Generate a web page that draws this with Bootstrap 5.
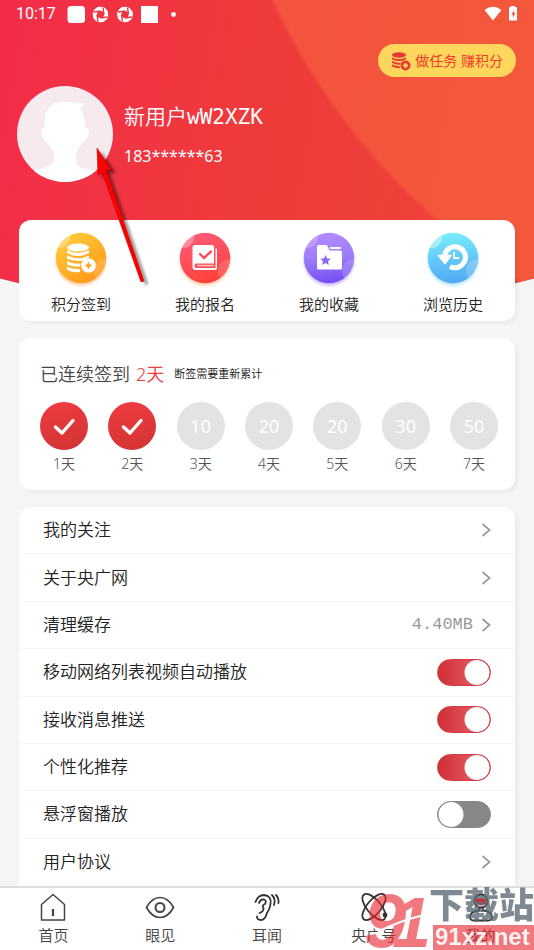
<!DOCTYPE html>
<html lang="zh-CN">
<head>
<meta charset="utf-8">
<meta name="viewport" content="width=device-width, initial-scale=1">
<title>我的</title>
<link href="https://cdn.jsdelivr.net/npm/bootstrap@5.3.0/dist/css/bootstrap.min.css" rel="stylesheet">
<style>
body{font-family:"Noto Sans","Noto Sans CJK SC",sans-serif;background:#f5f5f5;color:#222;line-height:1.5;font-size:15px}
a{color:inherit;text-decoration:none}
.hero-bg{height:312px;z-index:0;clip-path:ellipse(111% 100% at 50% 0);
 background:radial-gradient(circle 654px at calc(100% + 331px) -273px,rgba(248,104,62,.55) 650px,transparent 655px),linear-gradient(100deg,#f32c4a,#ef3a3b 45%,#ee4638)}
.status-bar{height:28px;padding:0 16px;font:400 16px/28px Roboto,sans-serif}
.task-row{padding:16px 18px 0}
.task-pill{background:#ffd65c;color:#f23c28;height:33px;font-size:14px;line-height:20px;padding:0 13px;border:0}
.profile-row{padding:9px 17px 0}
.avatar-pic{width:96px;height:96px}
.profile-text{padding-left:11px}
.user-name{font-family:"DejaVu Sans Mono","Noto Sans CJK SC",monospace;font-size:21px;line-height:32px;font-weight:350}
.user-phone{font-size:16px;line-height:22px;margin-top:12px}
.panel{border:0;border-radius:12px;box-shadow:3px 3px 3px #0000000a}
.page-body{padding:38px 19px 0}
.quick-grid{padding:12px 0 6px}
.quick-grid svg{width:56px;height:58px}
.quick-grid span{font-size:15px;line-height:22px;margin-top:3px}
.sign-card{margin-top:17px;padding:23px 17px 16px 21px}
.sign-title{font-size:18px;line-height:26px;color:#444}
.sign-title b{font-weight:350;color:#f03a3c;margin-left:6px}
.sign-title small{font-size:11px;color:#111;margin-left:10px}
.day-list{margin-top:15px}
.day-dot{width:48px;height:48px;background:#e3e3e3;color:#fff;font-size:18px;font-weight:400}
.day-dot.done{background:linear-gradient(170deg,#f03b41,#d23434)}
.day-list li>span:last-child{font-size:14px;line-height:20px;color:#555;margin-top:4px}
.menu-card,.quick-grid,.sign-title,.day-list,.tab-bar{font-weight:350}
.menu-card{margin-top:17px;border-radius:12px 12px 0 0}
.menu-card .menu-item{flex:1 0 44px;padding:0 24px;font-size:17px;line-height:26px;border-bottom:1px solid #f4f4f4}
.menu-card .menu-item:last-child{border-bottom:0}
.cache-size{font-family:"Liberation Mono",monospace;font-size:17px;color:#999}
.form-check-input.toggle{width:54px;height:27px;margin:0;border:1px solid #878787;border-radius:14px;
 background:radial-gradient(circle at 13px 50%,#fff 12px,transparent 13px),#878787}
.form-check-input.toggle:checked{border-color:#d6393f;
 background:radial-gradient(circle at calc(100% - 13px) 50%,#fff 12px,transparent 13px),linear-gradient(90deg,#d02f35,#dd5358 60%)}
.tab-bar{border-top:2px solid #dedede;padding:4px 0 3px;z-index:5}
.tab-bar svg{width:32px;height:32px}
.tab-bar span{font-size:15px;line-height:23px;color:#444}
.pointer-arrow{left:90px;top:140px;width:66px;height:152px;z-index:8}
.stamp{right:0;bottom:0;width:170px;height:80px;z-index:9;pointer-events:none}
</style>
<script src="https://cdn.jsdelivr.net/npm/bootstrap@5.3.0/dist/js/bootstrap.bundle.min.js"></script>
</head>
<body>
<svg class="d-none">
 <symbol id="chev" viewBox="0 0 10 14"><path d="M1.500 1 8.500 7 1.500 13" fill="none" stroke="#999" stroke-width="1.700"/></symbol>
 <symbol id="tick" viewBox="0 0 48 48"><path d="M15.500 25 22 31 33 18.500" fill="none" stroke="#fff" stroke-width="3.400" stroke-linecap="round" stroke-linejoin="round"/></symbol>
 <symbol id="swirl" viewBox="0 0 16 16"><circle cx="8" cy="8" r="5.700" fill="none" stroke="#fff" stroke-width="4.400"/><g stroke="#f0353f" stroke-width="1.400"><path d="M1 5.500 8 4.500M10.500 1 11.500 8M15 10.500 8 11.500M5.500 15 4.500 8"/></g><path d="M8 4.500 11.500 8 8 11.500 4.500 8Z" fill="#f0353f"/></symbol>
</svg>
<div class="position-relative d-flex flex-column min-vh-100 overflow-hidden">
 <div class="hero-bg position-absolute top-0 start-0 w-100"></div>
 <header class="position-relative text-white">
  <div class="status-bar d-flex align-items-center">
   <span>10:17</span>
   <svg class="ms-2" width="112" height="18" viewBox="0 0 112 18"><g fill="#fff"><rect x="3.500" y="1" width="17.500" height="17" rx="3.500"/><rect x="77" y="1" width="17" height="17"/><circle cx="109.500" cy="9.500" r="2.400"/></g><use href="#swirl" x="28.500" y="1.500" width="16" height="16"/><use href="#swirl" x="53" y="1.500" width="16" height="16"/></svg>
   <svg class="ms-auto" width="34" height="18" viewBox="0 0 34 18"><path d="M.500 5Q9-1.500 17.500 5L9 15.500Z" fill="#fff"/><path d="M27 2V1h4v1h1q1 0 1 1V15.500h-8V3q0-1 1-1Z" fill="#fff"/><path d="M30.500 4.500 27.500 9.500h1.300v3.500L31.200 8H29.800Z" fill="#f2503a"/></svg>
  </div>
  <div class="task-row d-flex justify-content-end">
   <button class="task-pill rounded-pill d-flex align-items-center gap-1" type="button">
    <svg width="20" height="20" viewBox="0 0 20 20"><g fill="#e83b35"><ellipse cx="8" cy="4" rx="7" ry="2.700"/><path d="M1 6.200Q8 10 15 6.200V8.200Q8 12 1 8.200ZM1 9.800Q5 12.300 10 11.500L9 13.700Q4 14 1 11.800ZM1 13.300Q4 15.300 8.500 15L9 17.300Q4 17.500 1 15.500Z"/><circle cx="14.500" cy="14.500" r="5"/></g><path d="M14.500 12v5M12 14.500h5" stroke="#ffd65c" stroke-width="1.800"/></svg>
    <span>做任务 赚积分</span>
   </button>
  </div>
  <div class="profile-row d-flex align-items-center">
   <svg class="avatar-pic rounded-circle" viewBox="0 0 96 96"><rect width="96" height="96" fill="#f6eaee"/><path d="M27.500 42V36Q28 17 46 15.500Q56 16.500 66.500 17.500Q66 20 63.500 22Q68 30 68 41.500Q73 42 71.500 48Q70 54 66 56Q60 63 59 68V77Q61 81 69 82.500Q76 83.500 82 86V96H14V86L24 82.500Q37 79 37 74V68Q36 63 29 56Q25 52 24.500 48Q23 42 27.500 42Z" fill="#fff"/></svg>
   <div class="profile-text">
    <h1 class="user-name m-0">新用户wW2XZK</h1>
    <div class="user-phone">183******63</div>
   </div>
  </div>
 </header>
 <main class="page-body position-relative d-flex flex-column flex-grow-1">
  <nav class="panel card">
   <div class="quick-grid row g-0 text-center">
    <a class="col d-flex flex-column align-items-center" href="#">
     <svg viewBox="0 0 56 58"><defs><linearGradient id="g1" x2=".7" y2="1"><stop stop-color="#ffd440"/><stop offset="1" stop-color="#ff9818"/></linearGradient><filter id="sh" x="-20%" y="-20%" width="140%" height="140%"><feGaussianBlur stdDeviation="1.500"/></filter><clipPath id="cc"><circle cx="28" cy="26" r="25.200"/></clipPath></defs><circle cx="28" cy="28.500" r="25" fill="#ff8c3c" opacity=".45" filter="url(#sh)"/><g clip-path="url(#cc)"><circle cx="28" cy="26" r="26" fill="url(#g1)"/><circle cx="6" cy="5" r="11" fill="#fff" opacity=".3"/><circle cx="53" cy="39" r="12" fill="#fff" opacity=".16"/></g><g fill="#fff"><ellipse cx="25" cy="15.500" rx="11" ry="4"/><path d="M14 18Q25 24 36 18v3Q25 27 14 21ZM14 23.500Q25 29 36 23.500v2L31 28.500Q21 30 14 26.500ZM14 29Q19 32 27.500 31.500L27 34.800Q19 35 14 32.500ZM14 34.500Q19 37.500 26.500 37l1 3Q19 41 14 37.500Z"/><circle cx="35.500" cy="33.500" r="7.300"/></g><path d="m35.500 30.500 1 2 2 1-2 1-1 2-1-2-2-1 2-1Z" fill="#ffa51f" stroke="#ffa51f"/></svg>
     <span>积分签到</span></a>
    <a class="col d-flex flex-column align-items-center" href="#">
     <svg viewBox="0 0 56 58"><defs><linearGradient id="g2" x2=".4" y2="1"><stop stop-color="#ff5f80"/><stop offset="1" stop-color="#ff423e"/></linearGradient></defs><circle cx="28" cy="28.500" r="25" fill="#ff8c3c" opacity=".45" filter="url(#sh)"/><g clip-path="url(#cc)"><circle cx="28" cy="26" r="26" fill="url(#g2)"/><circle cx="6" cy="5" r="11" fill="#fff" opacity=".3"/><circle cx="53" cy="39" r="12" fill="#fff" opacity=".16"/></g><path d="M15.500 15.500q0-2.500 2.500-2.500H35q2 0 2 2V31.500H19q-1.500 0-1.500 2.200T19 36H38.500V16q1.500 0 1.500 1.500V36q0 2-2 2H18.500q-3 0-3-3Z" fill="#fff"/><rect x="20" y="32.800" width="17" height="1.800" rx=".9" fill="#fff" opacity=".6"/><path d="m23 22 4 4 7-6.500" fill="none" stroke="#ff4c58" stroke-width="2.400" stroke-linecap="round"/></svg>
     <span>我的报名</span></a>
    <a class="col d-flex flex-column align-items-center" href="#">
     <svg viewBox="0 0 56 58"><defs><linearGradient id="g3" x2=".1" y2="1"><stop stop-color="#b68aff"/><stop offset=".5" stop-color="#a07ffb"/><stop offset="1" stop-color="#7650f2"/></linearGradient></defs><circle cx="28" cy="28.500" r="25" fill="#8058ff" opacity=".45" filter="url(#sh)"/><g clip-path="url(#cc)"><circle cx="28" cy="26" r="26" fill="url(#g3)"/><circle cx="6" cy="5" r="11" fill="#fff" opacity=".2"/><circle cx="53" cy="39" r="12" fill="#fff" opacity=".16"/></g><path d="M16 14.500q0-1.500 1.500-1.500H25q1 0 1.500 1l2 4.500h10.500q2 0 2 2V36q0 1.500-1.500 1.500h-22Q16 37.500 16 36Z" fill="#fff"/><rect x="29" y="15" width="11" height="2" rx="1" fill="#fff"/><path d="m24.500 23 1.600 3.400 3.700.400-2.800 2.500.800 3.700-3.300-1.900-3.300 1.900.8-3.700-2.800-2.500 3.700-.400Z" fill="#8d68f6"/></svg>
     <span>我的收藏</span></a>
    <a class="col d-flex flex-column align-items-center" href="#">
     <svg viewBox="0 0 56 58"><defs><linearGradient id="g4" x2=".1" y2="1"><stop stop-color="#7af2fc"/><stop offset="1" stop-color="#53a8f2"/></linearGradient></defs><circle cx="28" cy="28.500" r="25" fill="#4cc8ff" opacity=".45" filter="url(#sh)"/><g clip-path="url(#cc)"><circle cx="28" cy="26" r="26" fill="url(#g4)"/><circle cx="6" cy="5" r="11" fill="#fff" opacity=".4"/><circle cx="53" cy="39" r="12" fill="#fff" opacity=".2"/></g><path d="M19.500 24A10.500 10.500 0 1 1 25 34.500" fill="none" stroke="#fff" stroke-width="5"/><path d="M13.500 23.500h12.500L20 31.500Z" fill="#fff" stroke="#fff" stroke-width="1.500" stroke-linejoin="round"/><path d="M29 20v6h5" fill="none" stroke="#fff" stroke-width="2"/></svg>
     <span>浏览历史</span></a>
   </div>
  </nav>
  <section class="panel card sign-card">
   <h2 class="sign-title m-0 d-flex align-items-center"><span>已连续签到</span><b>2天</b><small>断签需要重新累计</small></h2>
   <ul class="day-list list-unstyled d-flex justify-content-between mb-0">
    <li class="d-flex flex-column align-items-center"><span class="day-dot done rounded-circle"><svg width="48" height="48"><use href="#tick"/></svg></span><span>1天</span></li>
    <li class="d-flex flex-column align-items-center"><span class="day-dot done rounded-circle"><svg width="48" height="48"><use href="#tick"/></svg></span><span>2天</span></li>
    <li class="d-flex flex-column align-items-center"><span class="day-dot rounded-circle d-flex align-items-center justify-content-center">10</span><span>3天</span></li>
    <li class="d-flex flex-column align-items-center"><span class="day-dot rounded-circle d-flex align-items-center justify-content-center">20</span><span>4天</span></li>
    <li class="d-flex flex-column align-items-center"><span class="day-dot rounded-circle d-flex align-items-center justify-content-center">20</span><span>5天</span></li>
    <li class="d-flex flex-column align-items-center"><span class="day-dot rounded-circle d-flex align-items-center justify-content-center">30</span><span>6天</span></li>
    <li class="d-flex flex-column align-items-center"><span class="day-dot rounded-circle d-flex align-items-center justify-content-center">50</span><span>7天</span></li>
   </ul>
  </section>
  <section class="panel card menu-card flex-grow-1">
   <a class="menu-item d-flex align-items-center justify-content-between" href="#">我的关注<svg width="10" height="14"><use href="#chev"/></svg></a>
   <a class="menu-item d-flex align-items-center justify-content-between" href="#">关于央广网<svg width="10" height="14"><use href="#chev"/></svg></a>
   <a class="menu-item d-flex align-items-center" href="#">清理缓存<span class="cache-size ms-auto me-2">4.40MB</span><svg width="10" height="14"><use href="#chev"/></svg></a>
   <div class="menu-item d-flex align-items-center justify-content-between"><label for="s1">移动网络列表视频自动播放</label><input class="form-check-input toggle" type="checkbox" role="switch" id="s1" checked></div>
   <div class="menu-item d-flex align-items-center justify-content-between"><label for="s2">接收消息推送</label><input class="form-check-input toggle" type="checkbox" role="switch" id="s2" checked></div>
   <div class="menu-item d-flex align-items-center justify-content-between"><label for="s3">个性化推荐</label><input class="form-check-input toggle" type="checkbox" role="switch" id="s3" checked></div>
   <div class="menu-item d-flex align-items-center justify-content-between"><label for="s4">悬浮窗播放</label><input class="form-check-input toggle" type="checkbox" role="switch" id="s4"></div>
   <a class="menu-item d-flex align-items-center justify-content-between" href="#">用户协议<svg width="10" height="14"><use href="#chev"/></svg></a>
  </section>
 </main>
 <nav class="tab-bar bg-white position-relative d-flex text-center">
  <a class="col d-flex flex-column align-items-center" href="#"><svg viewBox="0 0 32 32" fill="none" stroke="#444" stroke-width="1.500"><path d="M4.500 12.500 16 2.500 27.500 12.500V28H4.500Z" stroke-linejoin="round"/><path d="M16 17v7" stroke-width="2.200"/></svg><span>首页</span></a>
  <a class="col d-flex flex-column align-items-center" href="#"><svg viewBox="0 0 32 32" fill="none" stroke="#444" stroke-width="1.700"><path d="M2.500 15.500Q8 5.500 16 5.500T29.500 15.500Q24 25.500 16 25.500T2.500 15.500Z"/><circle cx="16" cy="15.500" r="4.500" stroke-width="2"/></svg><span>眼见</span></a>
  <a class="col d-flex flex-column align-items-center" href="#"><svg viewBox="0 0 32 32" fill="none" stroke="#333" stroke-width="1.800" stroke-linecap="round"><path d="M4.500 10Q7 3 13 3Q21 4 19.500 12Q19 17 16 21Q14 28 10 28Q6 28 6 24.500M8 11Q9.500 7 13 7.500Q16 8.500 14 12Q10.500 13.500 12.500 16Q12.500 20 8.500 21M21 3Q25 7 23 13M25 3Q28 6 27.500 11"/></svg><span>耳闻</span></a>
  <a class="col d-flex flex-column align-items-center" href="#"><svg viewBox="0 0 32 32" fill="none" stroke="#333" stroke-width="1.800"><ellipse cx="16" cy="15" rx="7" ry="16" transform="rotate(40 16 15)"/><ellipse cx="16" cy="15" rx="7" ry="16" transform="rotate(-40 16 15)"/><circle cx="27" cy="23" r="1.500" fill="#333"/></svg><span>央广号</span></a>
  <a class="col d-flex flex-column align-items-center" href="#"><svg viewBox="0 0 32 32" fill="none" stroke="#333" stroke-width="1.800"><circle cx="16" cy="9" r="6.500"/><path d="M11 6.500h10q1 7-5 7t-5-7Z" fill="#e0242c" stroke="none"/><path d="M14 15.500v3Q5 19 5 25q0 3.500 4 3.500h14q4 0 4-3.500 0-6-9-6.500v-3"/></svg><span>我的</span></a>
 </nav>
 <svg class="pointer-arrow position-absolute" viewBox="0 0 66 152" aria-hidden="true"><path transform="translate(4 3)" fill="#000" opacity=".45" filter="url(#sh)" d="M7 8 22 30 16 30 54 141 51 142 12 32 8 36Z"/><path d="M7 8 21 29.500 16 30 54 141 51 142 12 32 8 35.500Z" fill="#f00" stroke="#c00" stroke-width=".6"/></svg>
 <svg class="stamp position-absolute" viewBox="0 0 170 80" aria-hidden="true">
  <g fill="#e9262d" opacity=".62"><text x="0" y="77" font-family="Liberation Sans,sans-serif" font-style="italic" font-weight="700" font-size="76">9</text><text x="28" y="77" font-family="Liberation Sans,sans-serif" font-style="italic" font-weight="700" font-size="70">1</text><rect x="69" y="55" width="101" height="25"/></g>
  <path d="M14 62Q34 51 64 44" fill="none" stroke="#fff" stroke-width="2"/>
  <text x="65" y="48" font-family="Noto Sans CJK SC,sans-serif" font-weight="900" font-size="35" fill="#606c76" opacity=".8">下载站</text>
  <text x="71" y="75" font-family="Liberation Sans,sans-serif" font-weight="700" font-size="24" fill="#fff" opacity=".9">91xz.net</text>
 </svg>
</div>
</body>
</html>
